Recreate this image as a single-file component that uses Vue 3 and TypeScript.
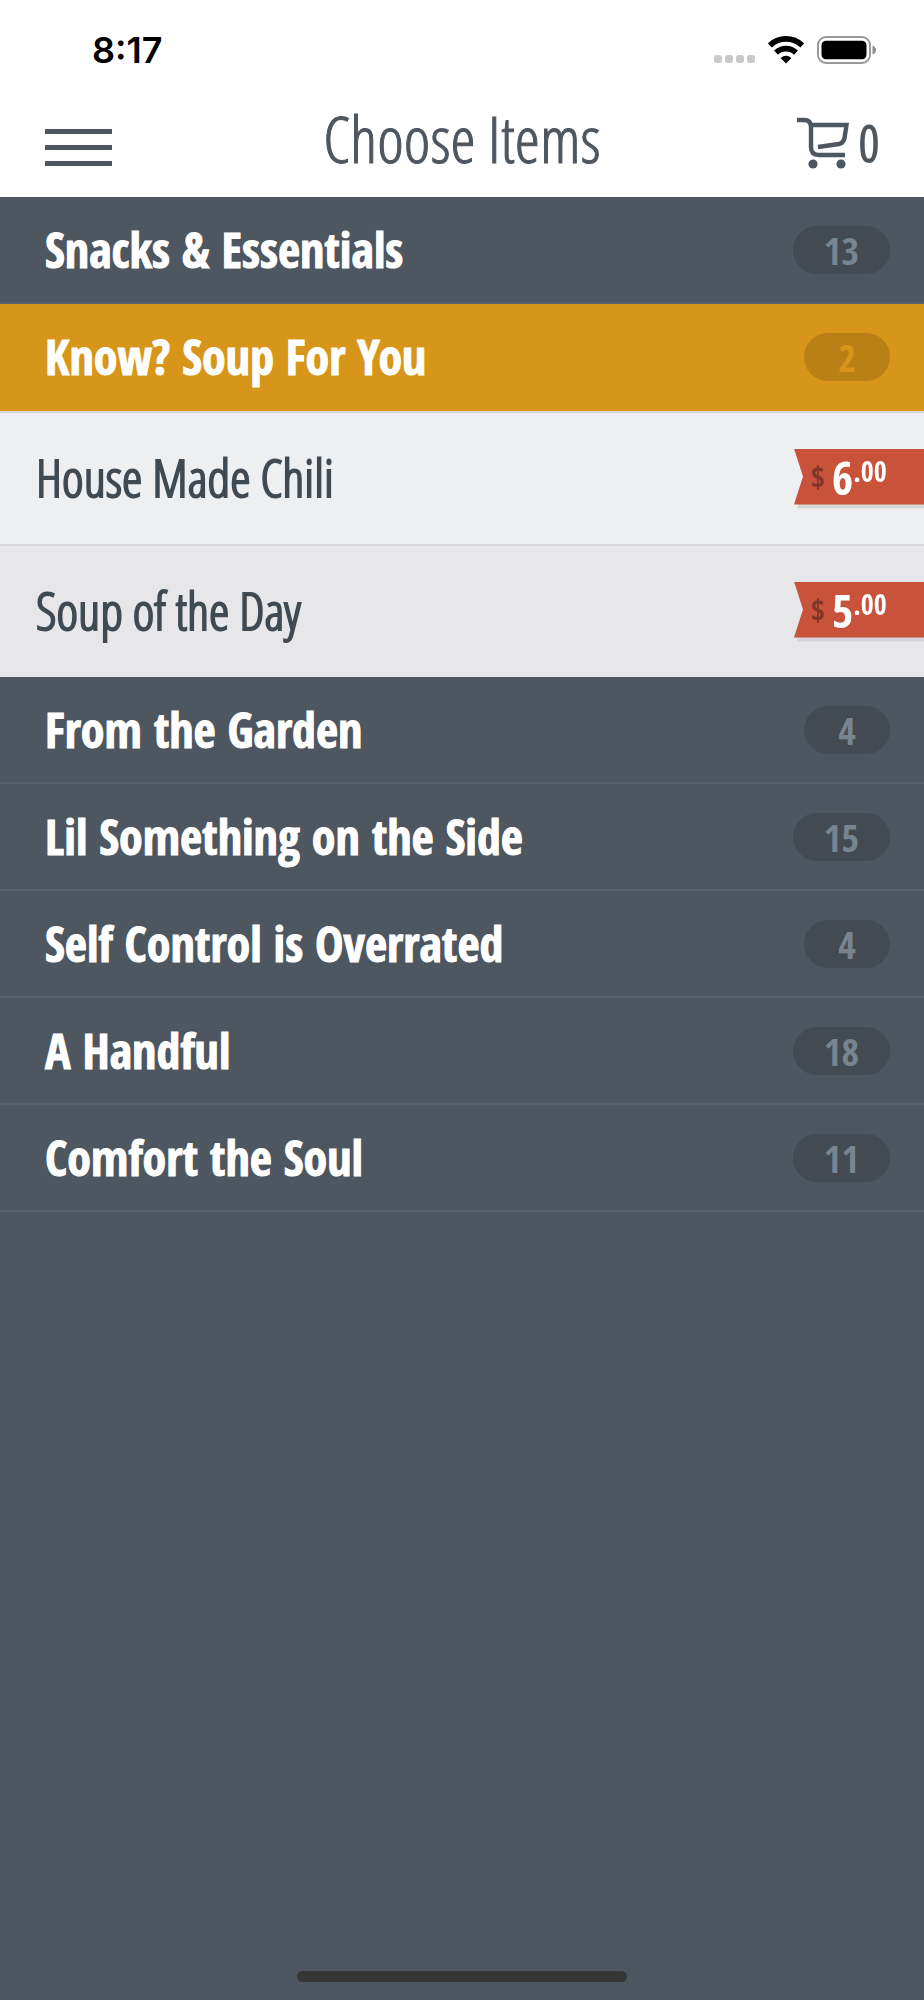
<script setup lang="ts">
interface MenuItem {
  name: string
  dollars: string
  cents: string
}

interface Category {
  name: string
  count: number
  items?: MenuItem[]
}

const categories: Category[] = [
  { name: 'Snacks & Essentials', count: 13 },
  {
    name: 'Know? Soup For You',
    count: 2,
    items: [
      { name: 'House Made Chili', dollars: '6', cents: '.00' },
      { name: 'Soup of the Day', dollars: '5', cents: '.00' },
    ],
  },
  { name: 'From the Garden', count: 4 },
  { name: 'Lil Something on the Side', count: 15 },
  { name: 'Self Control is Overrated', count: 4 },
  { name: 'A Handful', count: 18 },
  { name: 'Comfort the Soul', count: 11 },
]
</script>

<template>
  <div class="screen">
    <div class="status">
      <time class="clock">8:17</time>
      <div class="indicators">
        <svg width="42" height="28" viewBox="0 0 42 28" fill="#cacaca" aria-hidden="true">
          <rect x="0" y="19" width="8" height="8" rx="2.5" />
          <rect x="11" y="19" width="8" height="8" rx="2.5" />
          <rect x="22" y="19" width="8" height="8" rx="2.5" />
          <rect x="33" y="19" width="8" height="8" rx="2.5" />
        </svg>
        <svg class="wifi" width="36" height="28" viewBox="0 0 36 28" aria-hidden="true">
          <g fill="none" stroke="#000" stroke-width="5.6">
            <path d="M1.8 9.4A23.5 23.5 0 0 1 34.2 9.4" />
            <path d="M8 16.6A14.6 14.6 0 0 1 28 16.6" />
          </g>
          <path d="M18 27.4L12.6 22Q18 17.6 23.4 22Z" fill="#000" />
        </svg>
        <svg width="60" height="28" viewBox="0 0 60 28" aria-hidden="true">
          <rect x="1" y="1" width="52" height="26" rx="8" fill="none" stroke="#999" stroke-width="2" />
          <rect x="4.5" y="4.7" width="45" height="18.6" rx="4.5" />
          <path d="M55.5 9.5Q59 11 59 14T55.5 18.5Z" fill="#8c8c8c" />
        </svg>
      </div>
    </div>

    <header class="bar">
      <button class="menu" type="button" aria-label="Menu">
        <span></span><span></span><span></span>
      </button>
      <h1>Choose Items</h1>
      <button class="cart" type="button" aria-label="Cart, 0 items">
        <svg width="54" height="54" viewBox="0 0 54 54" aria-hidden="true">
          <g fill="none" stroke="#4e565f" stroke-width="4.4">
            <path d="M0 4H7Q14 4 14 11V31Q14 39 22 39H48" />
            <path d="M14 9H49.5L47.5 22Q46.5 27 42 28L21 31" />
          </g>
          <circle cx="16" cy="48" r="4.6" fill="#4e565f" />
          <circle cx="44" cy="48" r="4.6" fill="#4e565f" />
        </svg>
        <span>0</span>
      </button>
    </header>

    <main>
      <section v-for="category in categories" :key="category.name">
        <button
          class="category"
          :class="{ open: category.items }"
          type="button"
          :aria-expanded="!!category.items"
        >
          <span class="label">{{ category.name }}</span>
          <span class="count">{{ category.count }}</span>
        </button>
        <ul v-if="category.items" class="items">
          <li v-for="item in category.items" :key="item.name">
            <span class="item-name">{{ item.name }}</span>
            <span class="tag">
              <span class="price">
                <span class="currency">$</span>
                <span class="dollars">{{ item.dollars }}</span>
                <span class="cents">{{ item.cents }}</span>
              </span>
            </span>
          </li>
        </ul>
      </section>
    </main>

    <div class="home"></div>
  </div>
</template>

<style>
body {
  margin: 0;
  background: #4e565f;
}
</style>

<style scoped>
.screen {
  display: flex;
  flex-direction: column;
  min-height: 100vh;
  background: #4e565f;
  color: #4e565f;
  font-family: 'Open Sans Condensed', 'Liberation Sans Narrow', 'Open Sans', sans-serif;
}

button {
  margin: 0;
  padding: 0;
  border: 0;
  background: none;
  color: inherit;
  font: inherit;
  cursor: pointer;
}

.status {
  display: flex;
  align-items: center;
  justify-content: space-between;
  height: 100px;
  padding: 0 47px 0 92px;
  background: #fff;
}

.clock {
  color: #000;
  font-family: Inter, sans-serif;
  font-size: 36px;
  font-weight: 600;
  line-height: 40px;
}

.indicators {
  display: flex;
  align-items: center;
}

.wifi {
  margin: 0 13px 0 12px;
}

.bar {
  display: grid;
  grid-template-columns: 1fr auto 1fr;
  align-items: center;
  height: 97px;
  padding: 0 45px;
  background: #fff;
}

.menu {
  display: flex;
  flex-direction: column;
  justify-self: start;
  gap: 11px;
  width: 67px;
  padding-bottom: 3px;
}

.menu span {
  height: 5px;
  background: #4e565f;
}

h1,
.cart,
.item-name {
  font-family: 'Open Sans Condensed Light', 'Open Sans Condensed', 'Liberation Sans Narrow', sans-serif;
  font-weight: 300;
}

h1 {
  margin: 0;
  padding-bottom: 20px;
  font-size: 64px;
  line-height: 72px;
  -webkit-text-stroke: 1px #4e565f;
}

.cart {
  display: flex;
  align-items: center;
  justify-self: end;
  gap: 8px;
  padding-bottom: 11px;
  font-size: 50px;
  line-height: 54px;
  -webkit-text-stroke: 2px #4e565f;
}

.category {
  display: flex;
  align-items: center;
  justify-content: space-between;
  box-sizing: border-box;
  width: 100%;
  height: 107px;
  padding: 0 34px 0 45px;
  border-bottom: 2px solid #58616a;
  color: #fff;
  text-align: left;
}

.category.open {
  border-color: #d79619;
  background: #d79619;
}

.label {
  font-size: 48px;
  font-weight: 700;
  line-height: 56px;
  -webkit-text-stroke: 1px #fff;
}

.count {
  box-sizing: border-box;
  min-width: 86px;
  padding: 0 31px;
  border-radius: 24px;
  background: #434a51;
  color: #788590;
  font-size: 38px;
  font-weight: 700;
  line-height: 48px;
  text-align: center;
}

.open .count {
  background: #b98016;
  color: #d79619;
}

.items {
  margin: 0;
  padding: 0;
  background: #eeeff1;
  list-style: none;
}

.items li {
  display: flex;
  align-items: center;
  justify-content: space-between;
  box-sizing: border-box;
  height: 133px;
  padding: 0 0 4px 36px;
  border-top: 2px solid #d7d8da;
}

.items li:nth-child(even) {
  background: #e7e7e9;
}

.item-name {
  color: #404a52;
  font-size: 52px;
  line-height: 56px;
  -webkit-text-stroke: 2px #404a52;
}

.tag {
  filter: drop-shadow(3px 4px 0 #d5d6d8);
}

.price {
  display: flex;
  align-items: center;
  box-sizing: border-box;
  width: 130px;
  height: 56px;
  padding-left: 17px;
  background: #c9523a;
  clip-path: polygon(0 0, 100% 0, 100% 100%, 0 100%, 9px 50%);
  color: #fff;
  font-weight: 700;
}

.currency {
  width: 21px;
  color: #81382a;
  font-size: 30px;
}

.dollars {
  font-size: 46px;
  line-height: 56px;
}

.cents {
  align-self: flex-start;
  font-size: 28px;
  line-height: 44px;
}

.home {
  width: 330px;
  height: 11px;
  margin: auto auto 18px;
  border-radius: 6px;
  background: #363636;
}
</style>
